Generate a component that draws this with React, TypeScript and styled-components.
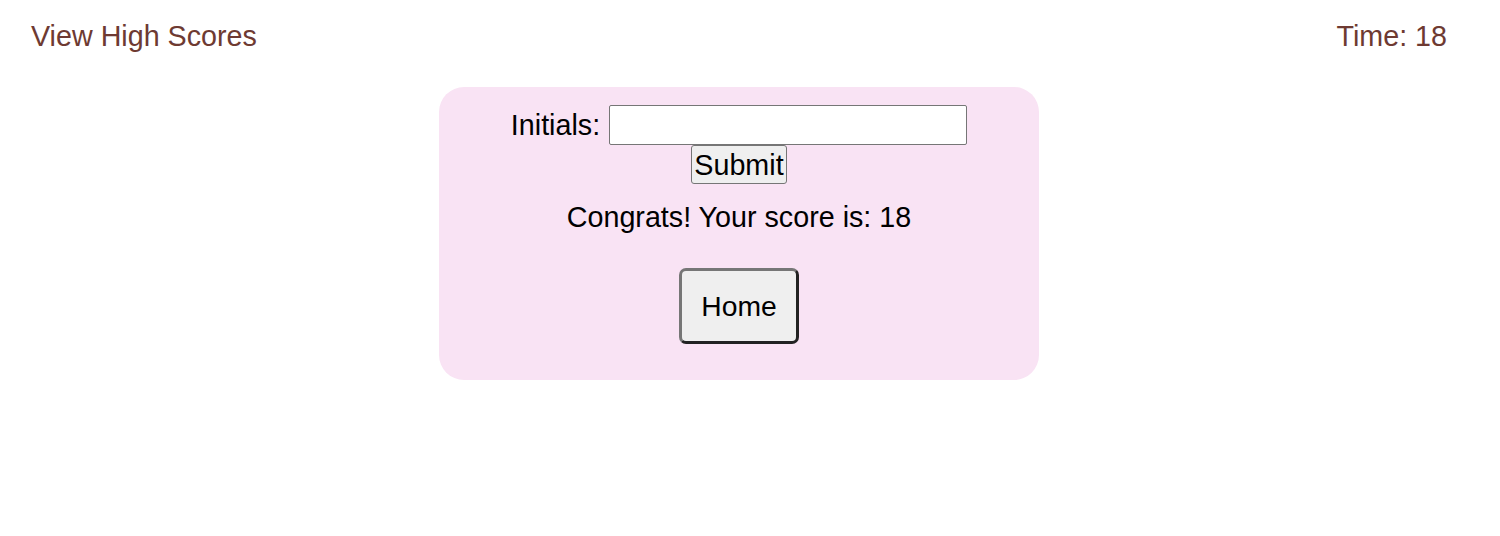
import React from "react";
import styled, { createGlobalStyle } from "styled-components";

const Global = createGlobalStyle`
  html, body { margin: 0; padding: 0; background: #ffffff; }
  body { font-family: "Liberation Sans", Arial, sans-serif; }
`;

const Header = styled.header`
  display: flex;
  justify-content: space-between;
  align-items: center;
  padding: 20px 53px 0 31px;
  height: 32px;
`;

const HeaderText = styled.span`
  font-size: 28.7px;
  line-height: 32px;
  color: #6e3a32;
  cursor: pointer;
`;

const Main = styled.main`
  display: flex;
  justify-content: center;
  padding: 35px 22px 0 0;
`;

const Card = styled.section`
  box-sizing: border-box;
  width: 600px;
  background: #f9e3f4;
  border-radius: 25px;
  padding: 18px 0 36px;
  display: flex;
  flex-direction: column;
  align-items: center;
`;

const Form = styled.form`
  display: flex;
  flex-direction: column;
  align-items: center;
`;

const Row = styled.div`
  display: flex;
  align-items: center;
  gap: 9px;
`;

const Label = styled.label`
  font-size: 28.7px;
  line-height: 32px;
  color: #000;
`;

const Input = styled.input`
  box-sizing: border-box;
  width: 358px;
  height: 40px;
  border: 1px solid #767676;
  border-radius: 2px;
  background: #fff;
  font-size: 28px;
  font-family: inherit;
  padding: 1px 4px;
`;

const SubmitButton = styled.button`
  box-sizing: border-box;
  width: 96px;
  height: 39px;
  padding: 0;
  border: 1px solid #767676;
  border-radius: 3px;
  background: #efefef;
  font-family: inherit;
  font-size: 28.7px;
  line-height: 32px;
  color: #000;
`;

const Message = styled.p`
  margin: 17px 0 35px;
  font-size: 28.7px;
  line-height: 32px;
  color: #000;
`;

const HomeButton = styled.button`
  box-sizing: border-box;
  width: 120px;
  height: 76px;
  border-width: 3px;
  border-style: solid;
  border-color: #767676 #222222 #222222 #767676;
  border-radius: 7px;
  background: #efefef;
  font-family: inherit;
  font-size: 28.3px;
  line-height: 32px;
  color: #000;
  padding: 0;
`;

export default function App() {
  return (
    <>
      <Global />
      <Header>
        <HeaderText>View High Scores</HeaderText>
        <HeaderText>Time: 18</HeaderText>
      </Header>
      <Main>
        <Card>
          <Form onSubmit={(e) => e.preventDefault()}>
            <Row>
              <Label htmlFor="initials">Initials:</Label>
              <Input id="initials" type="text" />
            </Row>
            <SubmitButton type="submit">Submit</SubmitButton>
          </Form>
          <Message>Congrats! Your score is: 18</Message>
          <HomeButton type="button">Home</HomeButton>
        </Card>
      </Main>
    </>
  );
}
